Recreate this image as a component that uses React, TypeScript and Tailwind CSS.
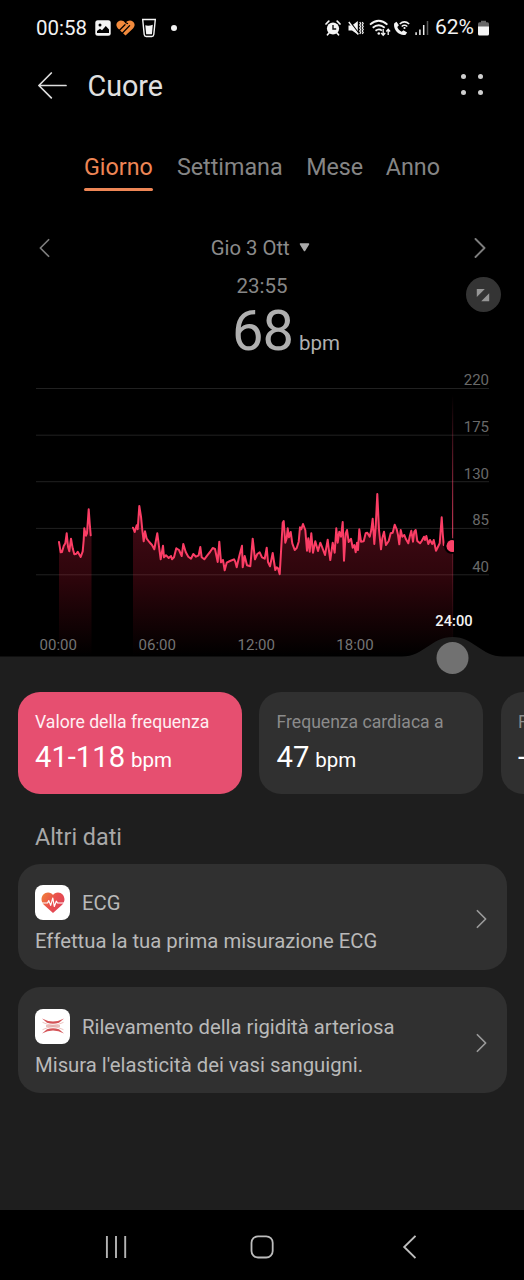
import React from "react";

const firstTrace =
  "59,542 60.7,552.3 62,552 63.7,546 65.3,543.3 66.7,533.3 68,546.7 69.3,551.3 71,538.7 72.7,548.3 74.3,554.3 76.3,553.7 77.7,551.7 79,554 80.7,557 82.7,551.3 83.7,540 84.3,528.3 86,535.7 87,533.3 88.7,509.3 89.7,523.3 90.7,535.3";

const secondTrace =
  "133,527.7 134.7,532 136.7,525.3 137.7,529.3 139.3,506 141,516.7 142.3,530 143.7,541.3 145,531.3 146.7,538.7 149.3,542 152,545 154.3,549.3 157.3,533.3 159,546.7 160.7,559.3 163,545.7 164,557.3 166,555.3 168.7,558 171,556 172,559.3 174,557.3 176.3,548.3 179,550 181.7,556 183.3,544 185.7,552 188.3,556.7 191,558.7 193.3,554 196,556.7 198.7,555.3 200.3,547 201.7,557.3 204.3,559.3 207.3,555.3 210,552 212.7,548 215,549 217.7,562 219.3,541.7 221,562.3 223,560 224.7,570.3 226.7,562.7 230,561 234,559.3 235.3,561.7 236.7,567.3 239.3,556 242,545.7 242.7,567.3 244.7,556 247,565.3 250.3,566.3 252.7,538.7 255,559.3 257.3,554 259.7,552.3 262,557.3 264.7,558.7 266.7,547.7 268,562 270,566.3 272.7,553 275.3,570 276.7,567.3 278,568.3 279.7,574.3 281.3,546.7 282.7,522.7 283.7,521 285.3,542.7 286.7,538.3 287.7,528.3 289,537.3 290.7,532 292.3,543.3 294.7,550 296.7,548 298.7,541.7 300,527.3 301.3,529.3 303,524 305.3,530 307,550.7 308.3,538.3 309.7,551.7 311.3,533.3 313,552.7 315.3,541.3 318,551 320.3,542.7 322.3,547.7 325,555 327.7,539.7 329,551 330.3,560 332.7,542.7 334.7,552.7 336.3,528.3 337.7,542.7 339.3,531.7 341,536.7 342.7,522 344,560.7 345.7,533.3 347,530 348.7,542 351,538.7 352.7,547.7 354.3,545 355.7,552.3 357,542.7 358,550 359.3,529.3 361,541.7 363.7,541.3 365.7,533.3 367.3,532.7 369.7,536.7 371.3,530 372.7,518.7 374.3,544 375.7,526.7 377.3,494 379,530 381,549.3 382.3,538.3 384,531.7 386,545 388.7,541 390.7,533.3 392.7,532.7 394.7,524.7 396.7,529.3 398,535 399.3,544.3 400.7,530 402.3,536.7 404.3,535 406,539.3 408.3,543.3 409.7,536.7 411.3,530.7 413,541.7 414.3,531.7 415.7,530 417.3,541 420,543.3 421.7,541 424,536.7 425,540 426.3,536 428.3,544 430,540 432.3,544 433.7,540 436,550.7 438,546.7 439.7,543.3 440.7,530 441.7,517.3 442.7,533.3 443.7,545";

const gridLines = [
  { y: 388.5, label: "220" },
  { y: 435.2, label: "175" },
  { y: 481.7, label: "130" },
  { y: 528.4, label: "85" },
  { y: 574.8, label: "40" },
];

const timeLabels = [
  { x: 58.3, label: "00:00" },
  { x: 157.2, label: "06:00" },
  { x: 256.2, label: "12:00" },
  { x: 355, label: "18:00" },
];

function Chevron({ left = false, className }: { left?: boolean; className: string }) {
  return (
    <svg className={className} viewBox="0 0 12 20" fill="none" stroke="currentColor" strokeLinecap="round" strokeLinejoin="round">
      <path d={left ? "M10.5 1 1.5 10l9 9" : "M1.5 1l9 9-9 9"} />
    </svg>
  );
}

function StatusBar() {
  return (
    <div className="flex h-14 items-center pl-[36px] pr-[35px] text-[20.5px] text-[#f2f2f2]">
      <span className="w-[59px] whitespace-nowrap">00:58</span>
      <svg className="h-4 w-4 shrink-0" viewBox="0 0 16 16">
        <rect x=".3" y=".3" width="15.4" height="15.4" rx="2.5" fill="#f5f5f5" />
        <circle cx="5" cy="5" r="1.5" fill="#000" />
        <path d="M2 13v-2l3-2.3 2 1.5L10.8 6 14 9.500V13Z" fill="#000" />
      </svg>
      <svg className="ml-[5px] h-4 w-[19px] shrink-0" viewBox="0 0 19 16">
        <path d="M9.500 15.500 2 8.500C-.4 6 .1 2.800 2.200 1.400c2.300-1.500 5-1 7.300 1.200 2.300-2.200 5-2.700 7.300-1.200 2.100 1.400 2.600 4.600.2 7.100Z" fill="#f28a3c" />
        <path d="M2.500 11.200 9 4.700M5.300 14.200 13.600 5.600" fill="none" stroke="#000" strokeWidth="1.300" strokeLinecap="round" />
        <path d="M8.500-.5 9.500 2.600l2.500 1.200" fill="none" stroke="#000" strokeWidth="1.200" />
      </svg>
      <svg className="ml-[6px] h-5 w-4 shrink-0" viewBox="0 0 16 20" fill="none">
        <path d="M1.700 1.500h12.600l-1.500 15q-.2 2-2 2H5.200q-1.800 0-2-2Z" stroke="#f5f5f5" strokeWidth="1.400" />
        <path d="M4.300 7.200q3 1.200 7.500-.5l-.9 9.500H5.200Z" fill="#f5f5f5" />
      </svg>
      <span className="ml-[13.500px] h-[6px] w-[6px] rounded-full bg-[#f2f2f2]" />
      <div className="flex-1" />
      <svg className="mr-[7px] h-4 w-4 shrink-0" viewBox="0 0 16 16">
        <circle cx="8" cy="8.500" r="6.100" fill="#f4f4f4" />
        <path d="M1 4l2.800-2.800M15 4l-2.800-2.800M4 13l-1.500 1.800M12 13l1.500 1.800" stroke="#f4f4f4" strokeWidth="1.700" strokeLinecap="round" />
        <path d="M8 5v4h3.200" stroke="#111" strokeWidth="1.400" fill="none" />
      </svg>
      <svg className="mr-[5px] h-4 w-4 shrink-0" viewBox="0 0 16 16">
        <path d="M.5 5.500h3.500L9.800 1v13.500L4 10.500H.5Z" fill="#f4f4f4" />
        <path d="M1.800 1.500l9 12" stroke="#000" strokeWidth="1.300" />
        <path d="M.8 2l9.500 12.500" stroke="#f4f4f4" strokeWidth="1.400" />
        <path d="M11.700 2l1 1.500-1 1.500 1 1.500-1 1.500 1 1.500-1 1.500 1 1.500-1 1.500M14.200 2l1 1.500-1 1.500 1 1.500-1 1.500 1 1.500-1 1.500 1 1.500-1 1.500" fill="none" stroke="#f4f4f4" strokeWidth="1.200" />
      </svg>
      <svg className="mr-[2px] h-[18px] w-[22px] shrink-0" viewBox="0 0 22 18" fill="none" stroke="#f4f4f4" strokeWidth="1.800">
        <path d="M1 5.600q8.700-7.800 17.400 0M3.700 8.800q6-5 12 0M6.500 11.800q3.300-2.600 6.400-.2" />
        <circle cx="9.800" cy="14.500" r="1.300" fill="#f4f4f4" stroke="none" />
        <path d="M14.200 10v6M12.200 14l2 2.200 2-2.200M19.200 16v-5.500M17.300 12.500l1.900-2.200 1.900 2.200" strokeWidth="1.300" />
      </svg>
      <svg className="mr-[5px] h-4 w-[17px] shrink-0" viewBox="0 0 17 16" fill="none">
        <path d="M1.300 3.300 3.500 1.800l2.400 3.500-1.600 1.800c.8 2.100 2.200 3.700 4.400 4.600l1.700-1.500 3.700 2.300-1.500 2.200C6.200 16.400-.4 9.200 1.300 3.300Z" fill="#f4f4f4" />
        <path d="M6.700 4q4.700-4.300 9.500 0M8.700 6.500q2.700-2.300 5.600 0" stroke="#f4f4f4" strokeWidth="1.500" />
        <circle cx="11.500" cy="8" r="1.100" fill="#f4f4f4" />
      </svg>
      <svg className="h-4 w-[14px] shrink-0" viewBox="0 0 14 16" strokeWidth="1.500">
        <path d="M1.100 12.300V15M4.900 9.500V15M8.700 5V15" stroke="#f0f0f0" />
        <path d="M12.500 1V15" stroke="#5a5a5a" />
      </svg>
      <span className="ml-[6px] w-[43px] shrink-0 whitespace-nowrap text-[21px]">62%</span>
      <svg className="h-4 w-[11px] shrink-0" viewBox="0 0 11 16">
        <path d="M3 .8h5v1.400h1.500Q11 2.200 11 4v4H0V4q0-1.800 1.500-1.800H3Z" fill="#666" />
        <path d="M0 6.500h11V14q0 1.500-1.500 1.500h-8Q0 15.500 0 14Z" fill="#f4f4f4" />
      </svg>
    </div>
  );
}

function Header() {
  return (
    <header className="flex h-[61px] items-center pl-[38px] pr-[41px]">
      <svg className="h-7 w-[29px] -translate-y-px" viewBox="0 0 29 28" fill="none" stroke="#dedede" strokeWidth="1.700" strokeLinecap="round" strokeLinejoin="round">
        <path d="M28 13.500H1M13.300 1 .9 13.500l12.400 12.300" />
      </svg>
      <h1 className="ml-[20.5px] text-[28.7px] leading-none text-[#e0e0e0]">Cuore</h1>
      <div className="ml-auto grid -translate-y-[2px] grid-cols-2 gap-x-[12px] gap-y-[11px]">
        {[0, 1, 2, 3].map((dot) => (
          <span key={dot} className="h-[5px] w-[5px] rounded-full bg-[#cfcfcf]" />
        ))}
      </div>
    </header>
  );
}

function Tabs() {
  return (
    <nav className="flex h-[99px] items-start gap-6 pl-[84px] pt-[36px] text-[23.3px] leading-[28px] text-[#858585]">
      <span className="flex flex-col text-[#ee8656]">
        Giorno
        <span className="mt-[7px] h-[3px] rounded-full bg-[#ee8656]" />
      </span>
      <span>Settimana</span>
      <span className="-ml-[0.5px]">Mese</span>
      <span className="-ml-[1.500px]">Anno</span>
    </nav>
  );
}

function Reading() {
  return (
    <section className="h-[152px]">
      <div className="flex h-16 items-center justify-between pl-[39px] pr-[38px] text-[#7d7d7d]">
        <Chevron left className="h-5 w-[11px] stroke-[1.900]" />
        <span className="flex items-center pr-[3.500px] text-[20.3px] text-[#8b8b8b]">
          Gio 3 Ott
          <svg className="ml-[9px] h-[9px] w-[11px] -translate-y-px" viewBox="0 0 11 9">
            <path d="M1.500 1h8L5.500 7.500Z" fill="#aaa" stroke="#aaa" strokeWidth="1.500" strokeLinejoin="round" />
          </svg>
        </span>
        <Chevron className="h-5 w-[12px] stroke-[1.900]" />
      </div>
      <div className="grid h-5 grid-cols-[1fr_160px_1fr]">
        <div className="col-start-2 text-center text-[20.5px] leading-[12px] text-[#868686]">23:55</div>
        <div className="flex items-start justify-end pr-[23.500px]">
          <span className="flex h-[35px] w-[35px] shrink-0 -translate-y-[3px] items-center justify-center rounded-full bg-[#343434]">
            <svg className="h-[14px] w-[14px]" viewBox="0 0 14 14" fill="#969696">
              <path d="M.8 1h8L.8 9ZM13.200 5.200v8h-8Z" />
            </svg>
          </span>
        </div>
      </div>
      <div className="flex items-baseline pl-[232px] pt-px text-[56px] leading-[60px] text-[#b0b0b0]">
        <span className="w-[67px] tracking-[-1px]">68</span>
        <span className="text-[20.5px] leading-none">bpm</span>
      </div>
    </section>
  );
}

function HeartChart() {
  return (
    <svg className="block h-[308px] w-[524px]" viewBox="0 368 524 308" fontFamily="Roboto, sans-serif" fontSize="15">
      <defs>
        <linearGradient id="area" gradientUnits="userSpaceOnUse" x1="0" y1="500" x2="0" y2="656">
          <stop offset="0" stopColor="#ff2b5b" stopOpacity=".27" />
          <stop offset=".5" stopColor="#ff1d40" stopOpacity=".18" />
          <stop offset="1" stopColor="#ff1d35" stopOpacity="0" />
        </linearGradient>
        <linearGradient id="cursor" gradientUnits="userSpaceOnUse" x1="0" y1="395" x2="0" y2="645">
          <stop offset="0" stopColor="#ff456d" stopOpacity="0" />
          <stop offset=".55" stopColor="#ff456d" stopOpacity=".75" />
          <stop offset=".64" stopColor="#ff456d" stopOpacity=".3" />
          <stop offset="1" stopColor="#ff456d" stopOpacity="0" />
        </linearGradient>
      </defs>
      {gridLines.map((line) => (
        <g key={line.label}>
          <path d={`M36 ${line.y}H489`} stroke="#212121" />
          <text x="489" y={line.y - 3.200} fill="#696969" textAnchor="end">{line.label}</text>
        </g>
      ))}
      <path d={`M59,656 L${firstTrace} L91.500,535 V656Z`} fill="url(#area)" />
      <path d={`M133,656 L${secondTrace} L452.500,546 V656Z`} fill="url(#area)" />
      <g fill="none" stroke="#fb3d65" strokeWidth="2" strokeLinejoin="round" strokeLinecap="round">
        <polyline points={firstTrace} />
        <polyline points={secondTrace} />
      </g>
      <rect x="452" y="395" width="1.200" height="250" fill="url(#cursor)" />
      <path d="M454 538.500a7.800 7.800 0 1 0 0 15Z" fill="#000" />
      <path d="M454 540.400a5.900 5.900 0 1 0 0 11.300Z" fill="#fb4268" />
      {timeLabels.map((time) => (
        <text key={time.label} x={time.x} y="650.200" fill="#747474" textAnchor="middle">{time.label}</text>
      ))}
      <text x="454" y="626" fill="#f4f4f4" fontWeight="500" fontSize="14.700" textAnchor="middle">24:00</text>
      <path d="M0 656.500H402C424 656.500 431 637 452.500 637S481 656.500 503 656.500H524V676H0Z" fill="#1e1e1e" />
      <circle cx="452.500" cy="658" r="16" fill="#717171" />
    </svg>
  );
}

function MetricCard({ title, value, unit, active = false }: { title: string; value: string; unit: string; active?: boolean }) {
  return (
    <article className={`h-[102px] w-[224px] shrink-0 rounded-[22px] px-[17.500px] pt-[18px] ${active ? "bg-[#e64f70]" : "bg-[#303030]"}`}>
      <div className={`whitespace-nowrap text-[17.600px] leading-6 ${active ? "text-[#fff0f3]" : "text-[#8b8b8b]"}`}>{title}</div>
      <div className="mt-[3px] flex h-10 items-baseline gap-[6px] text-[29.200px] leading-10 text-white">
        <span>{value}</span>
        <span className="text-[20.5px]">{unit}</span>
      </div>
    </article>
  );
}

function EcgIcon() {
  return (
    <svg className="h-6 w-6" viewBox="0 0 24 24">
      <defs>
        <linearGradient id="heart" x1="0" y1="0" x2="1" y2=".6">
          <stop offset="0" stopColor="#f18338" />
          <stop offset=".55" stopColor="#e9504d" />
          <stop offset="1" stopColor="#df4358" />
        </linearGradient>
      </defs>
      <path d="M12 22 2.800 13.800C-2 8.500 1.500 1.500 7 1.500c2.400 0 4 1 5 2.500 1-1.500 2.600-2.500 5-2.500 5.500 0 9 7 4.200 12.300Z" fill="url(#heart)" />
      <path d="M.8 12h5.700l1.300-2.400 1.900 4.800L11.800 7l1.500 8.500 2-5.300 1.200 1.800h6.700" fill="none" stroke="#fff" strokeWidth="1.200" strokeLinejoin="round" />
    </svg>
  );
}

function ArteryIcon() {
  return (
    <svg className="h-6 w-6" viewBox="0 0 24 24" fill="none">
      <path d="M1 4.500Q12 10.500 23 4.500L18 8.800Q12 10.500 6 8.800ZM1 19.500Q12 13.500 23 19.500L18 15.200Q12 13.500 6 15.200Z" fill="#d45458" />
      <path d="M1.500 8.300Q12 14 22.500 8.300M1.500 15.700Q12 10 22.500 15.700" stroke="#df9d98" strokeWidth=".6" />
      <path d="M5 12H19" stroke="#d98783" strokeWidth="1.100" />
    </svg>
  );
}

function DataCard({ icon, title, text }: { icon: React.ReactNode; title: string; text: string }) {
  return (
    <article className="flex h-[106px] items-center rounded-[22px] bg-[#303030] pl-[17.500px] pr-[20px] text-[#b9b9b9]">
      <div className="h-full flex-1 pt-[21.500px]">
        <div className="flex h-[35px] items-center">
          <span className="flex h-[35px] w-[35px] items-center justify-center rounded-[8px] bg-white">{icon}</span>
          <span className="ml-[12px] mt-[2px] text-[20.3px] leading-none">{title}</span>
        </div>
        <div className="mt-[9px] whitespace-nowrap text-[20.300px] leading-6">{text}</div>
      </div>
      <Chevron className="mt-[5px] h-5 w-[11px] stroke-[1.900] text-[#9a9a9a]" />
    </article>
  );
}

function NavigationBar() {
  return (
    <footer className="flex h-[70px] items-center bg-black pl-[105px] pt-[3px]">
      <svg className="h-6 w-[23px]" viewBox="0 0 23 24" stroke="#b4b4b4" strokeWidth="1.900">
        <path d="M1.900 1v22M11 1v22M20.200 1v22" />
      </svg>
      <svg className="ml-[122px] h-6 w-6" viewBox="0 0 24 24" fill="none" stroke="#bdbdbd" strokeWidth="1.800">
        <rect x="1.500" y="1.300" width="21.200" height="21.200" rx="6.500" />
      </svg>
      <svg className="ml-[128px] h-6 w-[14px]" viewBox="0 0 14 24" fill="none" stroke="#bdbdbd" strokeWidth="1.900">
        <path d="M13.500 .8 2.200 12 13.500 23" />
      </svg>
    </footer>
  );
}

export default function App() {
  return (
    <main className="flex h-[1280px] w-[524px] flex-col overflow-hidden bg-black font-['Roboto',sans-serif]">
      <StatusBar />
      <Header />
      <Tabs />
      <Reading />
      <HeartChart />
      <section className="flex-1 overflow-hidden bg-[#1e1e1e] px-[17.500px] pt-[15.500px]">
        <div className="flex gap-[17.500px]">
          <MetricCard title="Valore della frequenza" value="41-118" unit="bpm" active />
          <MetricCard title="Frequenza cardiaca a" value="47" unit="bpm" />
          <MetricCard title="Frequenza cardiaca" value="--" unit="bpm" />
        </div>
        <h2 className="flex h-[70px] items-center pl-[17.500px] pt-[19px] text-[23.3px] leading-none text-[#a8a8a8]">Altri dati</h2>
        <div className="flex flex-col gap-[17.500px]">
          <DataCard icon={<EcgIcon />} title="ECG" text="Effettua la tua prima misurazione ECG" />
          <DataCard icon={<ArteryIcon />} title="Rilevamento della rigidità arteriosa" text="Misura l'elasticità dei vasi sanguigni." />
        </div>
      </section>
      <NavigationBar />
    </main>
  );
}
